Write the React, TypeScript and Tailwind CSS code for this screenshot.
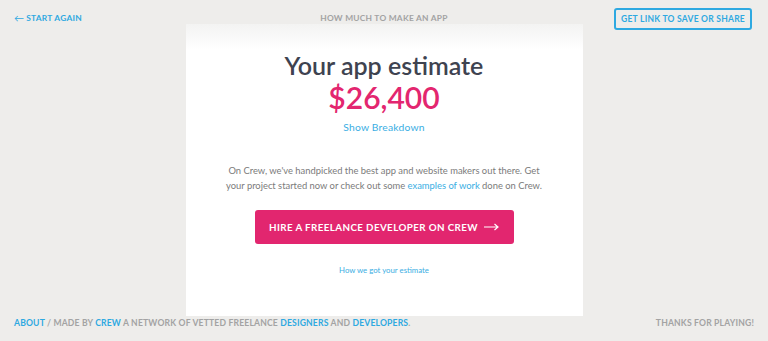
export default function App() {
  return (
    <div className="flex h-[341px] w-full flex-col bg-[#eeedeb] font-['Lato',sans-serif]">
      <div className="grid flex-1 grid-cols-[1fr_397px_1fr]">
        {/* left: start again */}
        <div className="pl-[14px] pt-[12px]">
          <a className="flex items-center gap-[2px] text-[8.4px] font-bold uppercase leading-[12px] tracking-[0.03em] text-[#2ea9e1]">
            <span className="text-[10px] font-normal">&larr;</span>
            <span>Start again</span>
          </a>
        </div>

        {/* center: title + card */}
        <div className="flex flex-col">
          <div className="pt-[12px] text-center text-[8.4px] font-bold uppercase leading-[12px] tracking-[0.03em] text-[#a3a3a3]">
            How much to make an app
          </div>
          <div className="flex flex-1 flex-col items-center bg-white">
            <div className="h-[26px] w-full bg-gradient-to-b from-[#f3f3f2] to-white" />
            <h1 className="text-[25px] font-semibold leading-[30px] text-[#3e4350]">Your app estimate</h1>
            <div className="text-[30px] font-semibold leading-[34px] text-[#e3266f]">$26,400</div>
            <a className="mt-[5px] text-[10.3px] leading-[16px] tracking-[0.02em] text-[#3aaee3]">Show Breakdown</a>
            <p className="mt-[28px] text-center text-[9.4px] leading-[15px] text-[#7b7b7b]">
              On Crew, we've handpicked the best app and website makers out there. Get
              <br />
              your project started now or check out some <a className="text-[#3aaee3]">examples of work</a> done on Crew.
            </p>
            <button className="mt-[17px] flex h-[34px] w-[259px] items-center justify-center gap-[6px] rounded-[3px] bg-[#e2266f] text-[9.8px] font-bold uppercase tracking-[0.04em] text-white">
              <span>Hire a freelance developer on crew</span>
              <svg width="15" height="8" viewBox="0 0 15 8" fill="none" stroke="white" strokeWidth="1.2">
                <path d="M0 4h14M10.5 1l3.5 3-3.5 3" />
              </svg>
            </button>
            <a className="mt-[20px] text-[7.8px] leading-[12px] text-[#3aaee3]">How we got your estimate</a>
          </div>
        </div>

        {/* right: share button */}
        <div className="flex items-start justify-end pr-[16px] pt-[8px]">
          <button className="flex h-[22px] items-center rounded-[3px] border-2 border-[#2ea9e1] px-[5px] text-[8.5px] font-bold uppercase tracking-[0.03em] text-[#2ea9e1]">
            Get link to save or share
          </button>
        </div>
      </div>

      {/* footer */}
      <div className="flex h-[25px] items-start justify-between px-[14px] pt-[1px] text-[8.6px] font-bold uppercase leading-[12px] tracking-[0.02em] text-[#a3a3a3]">
        <div>
          <a className="text-[#2ea9e1]">About</a> / Made by <a className="text-[#2ea9e1]">Crew</a> a network of vetted freelance{" "}
          <a className="text-[#2ea9e1]">designers</a> and <a className="text-[#2ea9e1]">developers</a>.
        </div>
        <div>Thanks for playing!</div>
      </div>
    </div>
  );
}
